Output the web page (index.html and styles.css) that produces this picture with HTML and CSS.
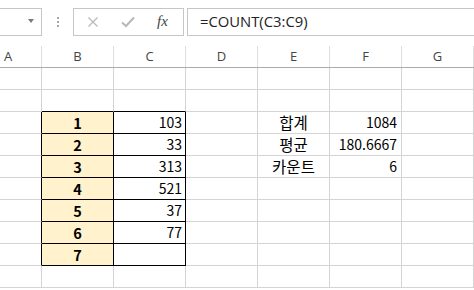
FILE: index.html
```html
<!DOCTYPE html>
<html lang="ko">
<head>
  <meta charset="UTF-8">
  <title>COUNT</title>
  <link rel="stylesheet" href="styles.css">
</head>
<body>
  <div class="toolbar">
    <div class="namebox"><span class="arrow"></span></div>
    <div class="grip"><i></i><i></i><i></i></div>
    <div class="fxbox">
      <svg class="ico" width="12" height="12" viewBox="0 0 12 12"><path d="M1.5 1.5 L10.5 10.5 M10.5 1.5 L1.5 10.5" stroke="#b8b8b8" stroke-width="1.2" fill="none"/></svg>
      <svg class="ico" width="14" height="12" viewBox="0 0 14 12"><path d="M1 6.5 L5 10 L13 1.5" stroke="#b8b8b8" stroke-width="2" fill="none"/></svg>
      <span class="fx">fx</span>
    </div>
    <div class="formula">=COUNT(C3:C9)</div>
  </div>

  <div class="head">
    <div class="hd">A</div><div class="hd">B</div><div class="hd">C</div><div class="hd">D</div><div class="hd">E</div><div class="hd">F</div><div class="hd">G</div>
  </div>

  <div class="sheet">
    <!-- row 1 -->
    <div class="c"></div><div class="c"></div><div class="c"></div><div class="c"></div><div class="c"></div><div class="c"></div><div class="c"></div>
    <!-- row 2 -->
    <div class="c"></div><div class="c fb"></div><div class="c fb"></div><div class="c"></div><div class="c"></div><div class="c"></div><div class="c"></div>
    <!-- row 3 -->
    <div class="c fr"></div><div class="c key">1</div><div class="c val">103</div><div class="c"></div><div class="c lbl">합계</div><div class="c num">1084</div><div class="c"></div>
    <!-- row 4 -->
    <div class="c fr"></div><div class="c key">2</div><div class="c val">33</div><div class="c"></div><div class="c lbl">평균</div><div class="c num">180.6667</div><div class="c"></div>
    <!-- row 5 -->
    <div class="c fr"></div><div class="c key">3</div><div class="c val">313</div><div class="c"></div><div class="c lbl">카운트</div><div class="c num">6</div><div class="c"></div>
    <!-- row 6 -->
    <div class="c fr"></div><div class="c key">4</div><div class="c val">521</div><div class="c"></div><div class="c"></div><div class="c"></div><div class="c"></div>
    <!-- row 7 -->
    <div class="c fr"></div><div class="c key">5</div><div class="c val">37</div><div class="c"></div><div class="c"></div><div class="c"></div><div class="c"></div>
    <!-- row 8 -->
    <div class="c fr"></div><div class="c key">6</div><div class="c val">77</div><div class="c"></div><div class="c"></div><div class="c"></div><div class="c"></div>
    <!-- row 9 -->
    <div class="c fr"></div><div class="c key">7</div><div class="c val"></div><div class="c"></div><div class="c"></div><div class="c"></div><div class="c"></div>
    <!-- row 10 -->
    <div class="c"></div><div class="c"></div><div class="c"></div><div class="c"></div><div class="c"></div><div class="c"></div><div class="c"></div>
  </div>
</body>
</html>
```

FILE: styles.css
```css
* {
  box-sizing: border-box;
}
body {
  margin: 0;
  background: #fff;
  font-family: "Noto Sans CJK KR", "Noto Sans", sans-serif;
  color: #000;
  overflow: hidden;
}
.toolbar {
  display: flex;
  align-items: center;
  padding-top: 8px;
  height: 36px;
}
.namebox {
  width: 43px;
  height: 28px;
  margin-left: -1px;
  border: 1px solid #c6c6c6;
  display: flex;
  align-items: center;
  justify-content: flex-end;
  padding-right: 7px;
}
.arrow {
  width: 0;
  height: 0;
  border-left: 3.5px solid transparent;
  border-right: 3.5px solid transparent;
  border-top: 4px solid #7a7a7a;
  margin-top: -3px;
}
.grip {
  width: 31px;
  height: 28px;
  display: flex;
  flex-direction: column;
  align-items: center;
  justify-content: center;
  gap: 2px;
}
.grip i {
  width: 2px;
  height: 2px;
  background: #a8a8a8;
}
.fxbox {
  width: 111px;
  height: 28px;
  border: 1px solid #c6c6c6;
  display: flex;
  align-items: center;
  padding-left: 13px;
}
.ico {
  margin-right: 22px;
}
.fx {
  font-family: "Liberation Serif", serif;
  font-style: italic;
  font-size: 15px;
  color: #444;
  margin-top: -2px;
}
.formula {
  flex: 1;
  height: 28px;
  margin-left: 3px;
  margin-right: -2px;
  border: 1px solid #c6c6c6;
  padding-left: 12px;
  font-family: "Open Sans", sans-serif;
  font-size: 14.8px;
  line-height: 25px;
  color: #222;
}
.head {
  display: grid;
  grid-template-columns: 42px repeat(6, 72px);
  padding-top: 10px;
  border-bottom: 1px solid #ababab;
}
.hd {
  height: 21px;
  border-right: 1px solid #dedede;
  font-family: "Open Sans", sans-serif;
  font-size: 13px;
  color: #444;
  text-align: center;
  line-height: 20px;
}
.hd:first-child {
  text-align: left;
  padding-left: 4px;
}
.sheet {
  display: grid;
  grid-template-columns: 42px repeat(6, 72px);
  grid-auto-rows: 22px;
}
.c {
  border-right: 1px solid #d4d4d4;
  border-bottom: 1px solid #d4d4d4;
  font-size: 14px;
  line-height: 21px;
  white-space: nowrap;
}
.fr {
  border-right-color: #000;
}
.fb {
  border-bottom-color: #000;
}
.key {
  background: #fff2cc;
  border-right-color: #000;
  border-bottom-color: #000;
  font-weight: bold;
  font-size: 14.5px;
  text-align: center;
}
.val {
  border-right-color: #000;
  border-bottom-color: #000;
  text-align: right;
  padding-right: 3px;
}
.lbl {
  font-size: 15.5px;
  text-align: center;
}
.num {
  text-align: right;
  padding-right: 4px;
}
```
